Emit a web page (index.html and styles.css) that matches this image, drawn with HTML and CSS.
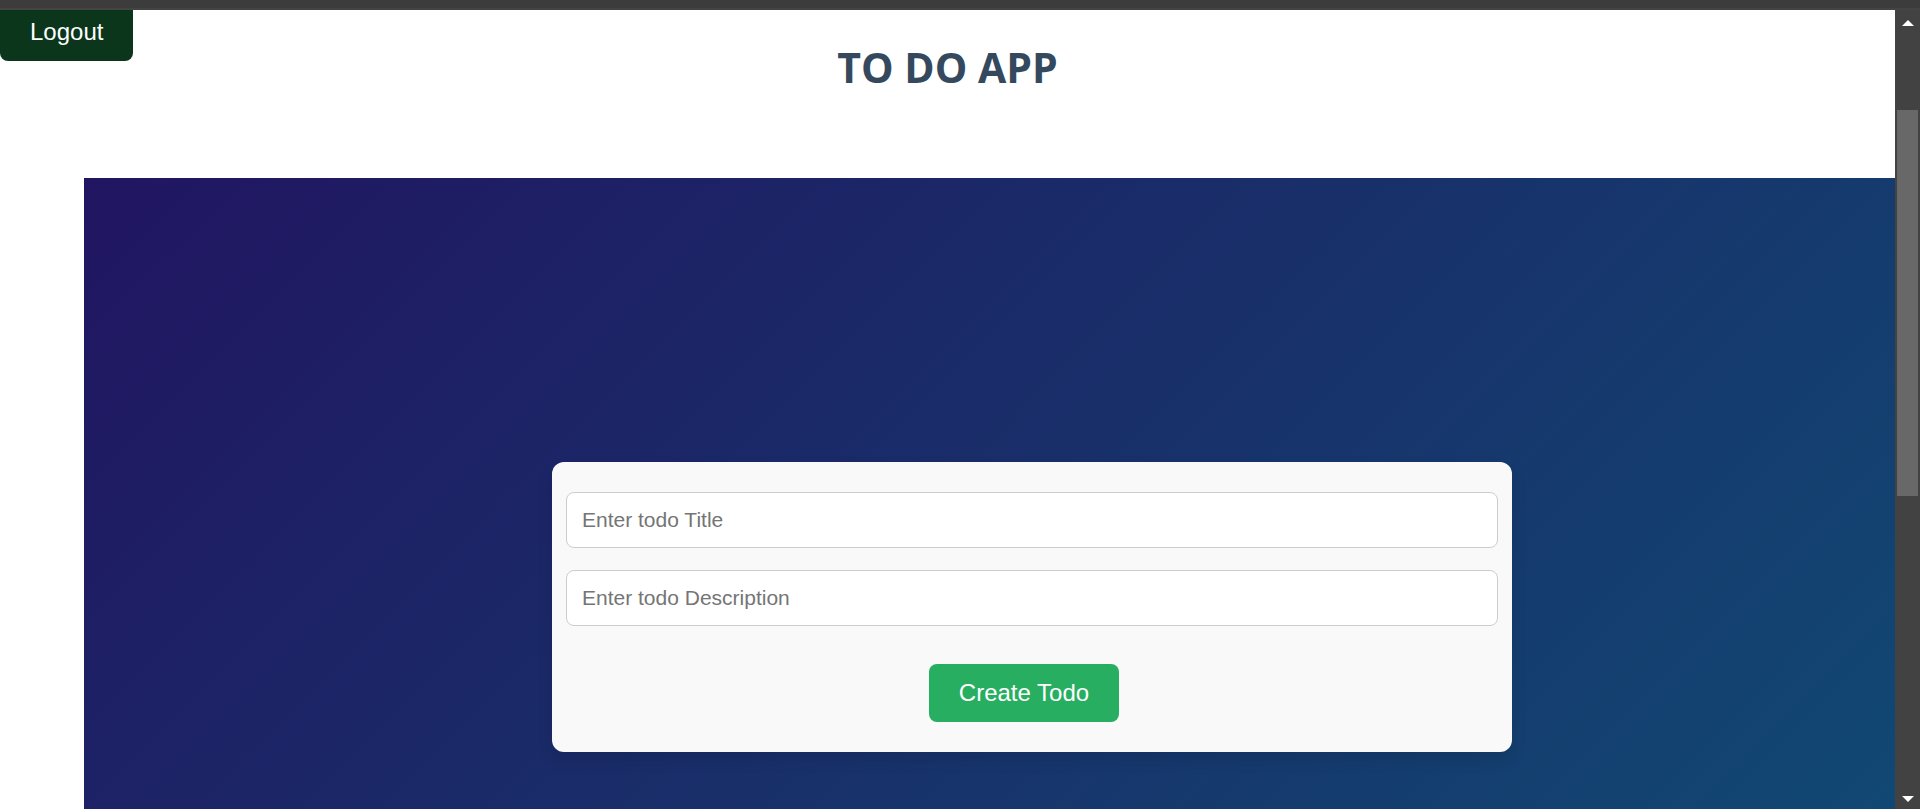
FILE: index.html
```html
<!DOCTYPE html>
<html lang="en">
<head>
<meta charset="utf-8">
<title>To Do App</title>
<link rel="stylesheet" href="styles.css">
</head>
<body>
<div class="topbar"></div>
<div class="viewport">
  <div class="page">
    <header class="header">
      <button class="btn logout" type="button">Logout</button>
      <h1 class="title">TO DO APP</h1>
    </header>
    <main class="panel">
      <form class="card">
        <input class="field" type="text" placeholder="Enter todo Title" aria-label="Todo title">
        <input class="field" type="text" placeholder="Enter todo Description" aria-label="Todo description">
        <button class="btn create" type="button">Create Todo</button>
      </form>
    </main>
  </div>
  <div class="scrollbar" aria-hidden="true">
    <svg class="arrow" viewBox="0 0 12 6"><path d="M6 0L12 6H0Z"/></svg>
    <div class="track"><div class="thumb"></div></div>
    <svg class="arrow" viewBox="0 0 12 6"><path d="M0 0H12L6 6Z"/></svg>
  </div>
</div>
</body>
</html>
```

FILE: styles.css
```css
* { box-sizing: border-box; }

body {
  margin: 0;
  height: 100vh;
  display: flex;
  flex-direction: column;
  overflow: hidden;
  background: #fff;
  font-family: "Liberation Sans", Arial, sans-serif;
}

.topbar {
  flex: none;
  height: 10px;
  background: #3c3c3c;
  border-bottom: 2px solid #444;
}

.viewport {
  flex: 1;
  min-height: 0;
  display: flex;
}

.page {
  flex: 1;
  min-width: 0;
  display: flex;
  flex-direction: column;
  overflow: hidden;
}

.header {
  flex: none;
  display: grid;
  height: 168px;
}

.header > * { grid-area: 1 / 1; }

.btn {
  border: 0;
  border-radius: 8px;
  color: #fff;
  font: 24px/28px "Liberation Sans", Arial, sans-serif;
  padding: 15px 30px;
  cursor: pointer;
}

.logout {
  justify-self: start;
  align-self: start;
  padding-top: 8px;
  border-radius: 0 0 8px 8px;
  background: #0b361c;
}

.title {
  justify-self: center;
  align-self: start;
  margin: 29px 0 0;
  color: #34495e;
  font: 700 41px/56px "Open Sans", "Noto Sans", sans-serif;
}

.panel {
  flex: 1;
  margin-left: 84px;
  padding: 284px 0 57px 85px;
  background: linear-gradient(135deg, #211561, #114873);
}

.card {
  width: 960px;
  max-width: 100%;
  margin: 0 auto;
  padding: 30px 14px;
  display: flex;
  flex-direction: column;
  border-radius: 12px;
  background: #f9f9f9;
  box-shadow: 0 8px 16px rgba(0, 0, 0, 0.1);
}

.field {
  width: 100%;
  height: 56px;
  margin: 0 0 22px;
  padding: 0 15px;
  border: 1px solid #ccc;
  border-radius: 8px;
  background: #fff;
  font: 21px "Liberation Sans", Arial, sans-serif;
}

.field::placeholder { color: #757575; }

.create {
  align-self: center;
  margin: 16px 16px 0 0;
  background: #27ae60;
}

.scrollbar {
  flex: none;
  width: 25px;
  padding: 10px 2px 7px;
  display: flex;
  flex-direction: column;
  align-items: center;
  background: #424242;
}

.arrow {
  flex: none;
  width: 12px;
  height: 6px;
  fill: #fff;
}

.track {
  flex: 1;
  display: flex;
  flex-direction: column;
  width: 100%;
  padding: 84px 0 300px;
}

.thumb {
  flex: 1;
  background: #686868;
}
```
